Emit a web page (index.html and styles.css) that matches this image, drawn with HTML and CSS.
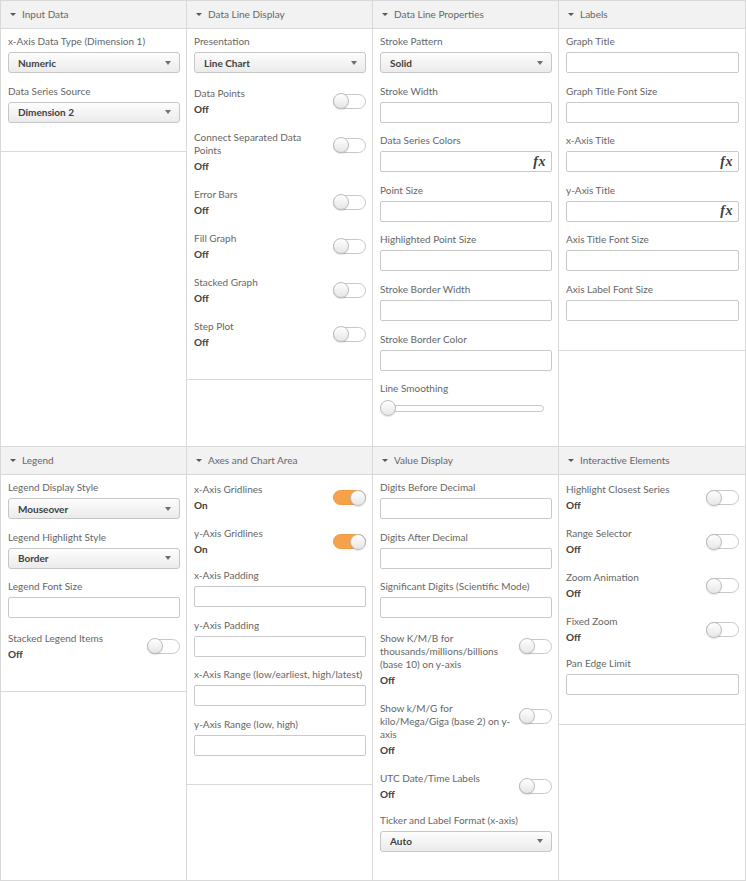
FILE: index.html
```html
<!DOCTYPE html>
<html lang="en">
<head>
<meta charset="utf-8">
<title>Properties</title>
<link rel="stylesheet" href="styles.css">
</head>
<body>
<div class="grid">
  <!-- Row 1 -->
  <section class="cell">
    <div class="panel">
      <div class="head"><span class="caret"></span>Input Data</div>
      <div class="body">
        <div class="field"><div class="label">x-Axis Data Type (Dimension 1)</div><div class="control select"><span>Numeric</span><span class="arrow"></span></div></div>
        <div class="field"><div class="label">Data Series Source</div><div class="control select"><span>Dimension 2</span><span class="arrow"></span></div></div>
      </div>
    </div>
  </section>
  <section class="cell">
    <div class="panel">
      <div class="head"><span class="caret"></span>Data Line Display</div>
      <div class="body">
        <div class="field"><div class="label">Presentation</div><div class="control select"><span>Line Chart</span><span class="arrow"></span></div></div>
        <div class="toggle-row"><div class="ttext"><div class="label">Data Points</div><div class="value">Off</div></div><div class="switch"><span class="knob"></span></div></div>
        <div class="toggle-row"><div class="ttext"><div class="label">Connect Separated Data Points</div><div class="value">Off</div></div><div class="switch"><span class="knob"></span></div></div>
        <div class="toggle-row"><div class="ttext"><div class="label">Error Bars</div><div class="value">Off</div></div><div class="switch"><span class="knob"></span></div></div>
        <div class="toggle-row"><div class="ttext"><div class="label">Fill Graph</div><div class="value">Off</div></div><div class="switch"><span class="knob"></span></div></div>
        <div class="toggle-row"><div class="ttext"><div class="label">Stacked Graph</div><div class="value">Off</div></div><div class="switch"><span class="knob"></span></div></div>
        <div class="toggle-row"><div class="ttext"><div class="label">Step Plot</div><div class="value">Off</div></div><div class="switch"><span class="knob"></span></div></div>
      </div>
    </div>
  </section>
  <section class="cell">
    <div class="panel">
      <div class="head"><span class="caret"></span>Data Line Properties</div>
      <div class="body">
        <div class="field"><div class="label">Stroke Pattern</div><div class="control select"><span>Solid</span><span class="arrow"></span></div></div>
        <div class="field"><div class="label">Stroke Width</div><div class="control"></div></div>
        <div class="field"><div class="label">Data Series Colors</div><div class="control fxbox"><span class="fx">fx</span></div></div>
        <div class="field"><div class="label">Point Size</div><div class="control"></div></div>
        <div class="field"><div class="label">Highlighted Point Size</div><div class="control"></div></div>
        <div class="field"><div class="label">Stroke Border Width</div><div class="control"></div></div>
        <div class="field"><div class="label">Stroke Border Color</div><div class="control"></div></div>
        <div class="field"><div class="label">Line Smoothing</div><div class="slider"><span class="sknob"></span><span class="track"></span></div></div>
      </div>
    </div>
  </section>
  <section class="cell">
    <div class="panel">
      <div class="head"><span class="caret"></span>Labels</div>
      <div class="body">
        <div class="field"><div class="label">Graph Title</div><div class="control"></div></div>
        <div class="field"><div class="label">Graph Title Font Size</div><div class="control"></div></div>
        <div class="field"><div class="label">x-Axis Title</div><div class="control fxbox"><span class="fx">fx</span></div></div>
        <div class="field"><div class="label">y-Axis Title</div><div class="control fxbox"><span class="fx">fx</span></div></div>
        <div class="field"><div class="label">Axis Title Font Size</div><div class="control"></div></div>
        <div class="field"><div class="label">Axis Label Font Size</div><div class="control"></div></div>
      </div>
    </div>
  </section>

  <!-- Row 2 -->
  <section class="cell row2">
    <div class="panel">
      <div class="head"><span class="caret"></span>Legend</div>
      <div class="body">
        <div class="field"><div class="label">Legend Display Style</div><div class="control select"><span>Mouseover</span><span class="arrow"></span></div></div>
        <div class="field"><div class="label">Legend Highlight Style</div><div class="control select"><span>Border</span><span class="arrow"></span></div></div>
        <div class="field"><div class="label">Legend Font Size</div><div class="control"></div></div>
        <div class="toggle-row"><div class="ttext"><div class="label">Stacked Legend Items</div><div class="value">Off</div></div><div class="switch"><span class="knob"></span></div></div>
      </div>
    </div>
  </section>
  <section class="cell row2">
    <div class="panel">
      <div class="head"><span class="caret"></span>Axes and Chart Area</div>
      <div class="body">
        <div class="toggle-row"><div class="ttext"><div class="label">x-Axis Gridlines</div><div class="value">On</div></div><div class="switch on"><span class="knob"></span></div></div>
        <div class="toggle-row"><div class="ttext"><div class="label">y-Axis Gridlines</div><div class="value">On</div></div><div class="switch on"><span class="knob"></span></div></div>
        <div class="field"><div class="label">x-Axis Padding</div><div class="control"></div></div>
        <div class="field"><div class="label">y-Axis Padding</div><div class="control"></div></div>
        <div class="field"><div class="label">x-Axis Range (low/earliest, high/latest)</div><div class="control"></div></div>
        <div class="field"><div class="label">y-Axis Range (low, high)</div><div class="control"></div></div>
      </div>
    </div>
  </section>
  <section class="cell row2">
    <div class="panel">
      <div class="head"><span class="caret"></span>Value Display</div>
      <div class="body">
        <div class="field"><div class="label">Digits Before Decimal</div><div class="control"></div></div>
        <div class="field"><div class="label">Digits After Decimal</div><div class="control"></div></div>
        <div class="field"><div class="label">Significant Digits (Scientific Mode)</div><div class="control"></div></div>
        <div class="toggle-row"><div class="ttext"><div class="label">Show K/M/B for thousands/millions/billions (base 10) on y-axis</div><div class="value">Off</div></div><div class="switch"><span class="knob"></span></div></div>
        <div class="toggle-row"><div class="ttext"><div class="label">Show k/M/G for kilo/Mega/Giga (base 2) on y-axis</div><div class="value">Off</div></div><div class="switch"><span class="knob"></span></div></div>
        <div class="toggle-row"><div class="ttext"><div class="label">UTC Date/Time Labels</div><div class="value">Off</div></div><div class="switch"><span class="knob"></span></div></div>
        <div class="field"><div class="label">Ticker and Label Format (x-axis)</div><div class="control select"><span>Auto</span><span class="arrow"></span></div></div>
      </div>
    </div>
  </section>
  <section class="cell row2">
    <div class="panel">
      <div class="head"><span class="caret"></span>Interactive Elements</div>
      <div class="body">
        <div class="toggle-row"><div class="ttext"><div class="label">Highlight Closest Series</div><div class="value">Off</div></div><div class="switch"><span class="knob"></span></div></div>
        <div class="toggle-row"><div class="ttext"><div class="label">Range Selector</div><div class="value">Off</div></div><div class="switch"><span class="knob"></span></div></div>
        <div class="toggle-row"><div class="ttext"><div class="label">Zoom Animation</div><div class="value">Off</div></div><div class="switch"><span class="knob"></span></div></div>
        <div class="toggle-row"><div class="ttext"><div class="label">Fixed Zoom</div><div class="value">Off</div></div><div class="switch"><span class="knob"></span></div></div>
        <div class="field"><div class="label">Pan Edge Limit</div><div class="control"></div></div>
      </div>
    </div>
  </section>
</div>
</body>
</html>
```
FILE: styles.css
```css
* { box-sizing: border-box; margin: 0; padding: 0; }

body {
  margin: 0;
  background: #fff;
  font-family: Lato, "Noto Sans", sans-serif;
  font-size: 10px;
  color: #666666;
}

.grid {
  width: 746px;
  height: 881px;
  display: grid;
  grid-template-columns: 186px 186px 186px 187px;
  grid-template-rows: 445px 434px;
  border-left: 1px solid #d9d9d9;
  border-top: 1px solid #d9d9d9;
  border-bottom: 1px solid #d9d9d9;
  overflow: hidden;
}

.cell {
  border-right: 1px solid #d9d9d9;
  overflow: hidden;
}

.cell.row2 {
  border-top: 1px solid #d9d9d9;
}

.panel {
  border-bottom: 1px solid #d9d9d9;
}

.head {
  height: 28px;
  line-height: 27px;
  background: #f2f2f2;
  border-bottom: 1px solid #d9d9d9;
  padding-left: 7px;
  display: flex;
  align-items: center;
  color: #666666;
}

.caret {
  width: 0;
  height: 0;
  border-left: 3px solid transparent;
  border-right: 3px solid transparent;
  border-top: 3px solid #595959;
  margin: 0 6px 0 2px;
}

.body {
  padding: 6px 6px 17px 7px;
}

.label {
  line-height: 13px;
}

.field {
  margin-bottom: 11.6px;
}

.field .label {
  margin-bottom: 4px;
}

.control {
  height: 21px;
  border: 1px solid #c9c9c9;
  border-radius: 2px;
  background: #fff;
}

.select {
  display: flex;
  align-items: center;
  justify-content: space-between;
  padding: 0 8px 0 9px;
  border-color: #c6c6c6;
  border-radius: 3px;
  background: linear-gradient(#fdfdfd, #ebebeb);
  font-weight: bold;
  color: #404040;
}

.arrow {
  width: 0;
  height: 0;
  border-left: 3px solid transparent;
  border-right: 3px solid transparent;
  border-top: 4px solid #707070;
}

.fxbox {
  display: flex;
  align-items: center;
  justify-content: flex-end;
  padding-right: 5px;
}

.fx {
  font-family: "Liberation Serif", serif;
  font-style: italic;
  font-weight: bold;
  font-size: 14px;
  color: #404040;
  letter-spacing: 0.5px;
}

.toggle-row {
  display: flex;
  align-items: flex-start;
  gap: 6px;
  padding-top: 2px;
  margin-bottom: 13px;
}

.ttext {
  flex: 1;
  min-width: 0;
}

.value {
  margin-top: 3px;
  line-height: 13px;
  font-weight: bold;
  color: #404040;
}

.switch {
  flex: none;
  width: 33px;
  height: 15px;
  margin-top: 7px;
  border: 1px solid #c8c8c8;
  border-radius: 8px;
  background: #fff;
  display: flex;
  align-items: center;
}

.switch.on {
  justify-content: flex-end;
  background: #f7a24a;
  border-color: #f29a40;
}

.knob {
  width: 16px;
  height: 16px;
  margin: 0 -1px;
  border-radius: 50%;
  border: 1px solid #bdbdbd;
  background: linear-gradient(#ffffff, #e6e6e6);
  box-shadow: 0 1px 1px rgba(0, 0, 0, 0.12);
}

.slider {
  height: 18px;
  display: flex;
  align-items: center;
  padding-right: 8px;
}

.sknob {
  flex: none;
  width: 16px;
  height: 16px;
  border-radius: 50%;
  border: 1px solid #bdbdbd;
  background: linear-gradient(#ffffff, #e6e6e6);
  box-shadow: 0 1px 1px rgba(0, 0, 0, 0.12);
  position: relative;
  z-index: 1;
}

.track {
  flex: 1;
  height: 7px;
  margin-left: -4px;
  border: 1px solid #c8c8c8;
  border-radius: 4px;
  background: #fff;
}
```
